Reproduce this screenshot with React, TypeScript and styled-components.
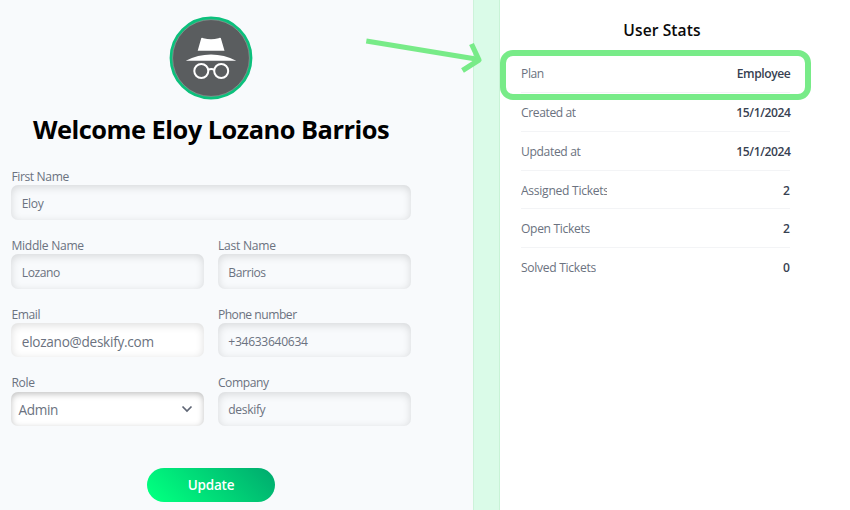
import React from 'react';
import styled, { createGlobalStyle } from 'styled-components';

const GlobalStyle = createGlobalStyle`
  *, *::before, *::after { box-sizing: border-box; }
  body {
    margin: 0;
    background: #fff;
    font-family: "Segoe UI", "Open Sans", "Noto Sans", sans-serif;
    overflow: hidden;
  }
`;

const Page = styled.div`
  position: relative;
  display: grid;
  grid-template-columns: 473px 27px 1fr;
  width: 850px;
  height: 510px;
  overflow: hidden;
`;

const Profile = styled.main`
  background: #f8fafc;
  display: flex;
  flex-direction: column;
  align-items: center;
  width: 473px;
  padding: 16px 62.4px 0 11.4px;
`;

const Divider = styled.div`
  background: #dafbe8;
  border-left: 1px solid #cdf2da;
  border-right: 1px solid #c8f3d6;
`;

const Avatar = styled.svg`
  display: block;
  width: 84px;
  height: 84px;
  flex: none;
`;

const Heading = styled.h1`
  margin: 11px 0 0;
  height: 36px;
  line-height: 36px;
  font-size: 25.4px;
  font-weight: 700;
  letter-spacing: -0.5px;
  color: #000;
  white-space: nowrap;
`;

const Form = styled.form`
  display: grid;
  grid-template-columns: 1fr 1fr;
  column-gap: 13.8px;
  row-gap: 16px;
  width: 100%;
  margin-top: 20px;
`;

const Field = styled.div<{ $wide?: boolean }>`
  grid-column: ${p => (p.$wide ? '1 / -1' : 'auto')};
  height: 52.8px;
`;

const Label = styled.label<{ $spacing: number }>`
  display: block;
  height: 18.4px;
  line-height: 19.6px;
  font-size: 12.1px;
  letter-spacing: ${p => p.$spacing}px;
  color: #6b7280;
  white-space: nowrap;
`;

const Control = styled.div<{ $editable?: boolean; $select?: boolean; $spacing: number }>`
  display: flex;
  align-items: center;
  justify-content: space-between;
  height: 34.4px;
  padding: ${p => (p.$select ? '2px 11px 0 7px' : '2px 10.4px 0')};
  border-radius: 7px;
  background: ${p => (p.$editable ? '#fff' : '#f8fafc')};
  box-shadow: inset 0 ${p => (p.$select ? '2px 6px rgba(0, 0, 0, 0.25)' : '2px 8px rgba(0, 0, 0, 0.14)')};
  font-size: ${p => (p.$editable ? 13.6 : 12.1)}px;
  letter-spacing: ${p => p.$spacing}px;
  color: #6b7280;
  white-space: nowrap;
`;

const Chevron = styled.svg`
  width: 12px;
  height: 8px;
  margin-top: -1px;
`;

const UpdateButton = styled.button`
  margin-top: 41.6px;
  width: 128.4px;
  height: 34.4px;
  flex: none;
  border: 0;
  border-radius: 18px;
  background: linear-gradient(45deg, #00ff7f 8%, #00a96e 100%);
  color: #fff;
  font: 600 13.5px "Segoe UI", "Open Sans", "Noto Sans", sans-serif;
  letter-spacing: -0.2px;
  padding: 1px 0 0;
`;

const Stats = styled.aside`
  padding: 18px 60px 0 21px;
`;

const StatsTitle = styled.h2`
  margin: 0 0 12.3px;
  padding-left: 13px;
  height: 24px;
  line-height: 24px;
  text-align: center;
  font-size: 15.6px;
  font-weight: 600;
  letter-spacing: 0.08px;
  color: #0a0a0a;
`;

const StatRow = styled.div`
  display: flex;
  align-items: center;
  justify-content: space-between;
  height: 38.75px;
  padding-top: 1.2px;
  border-bottom: 1px solid #f3f4f6;
  font-size: 12.1px;
  white-space: nowrap;
  &:last-child { border-bottom-color: transparent; }
`;

const StatName = styled.span<{ $spacing: number }>`
  max-width: 86px;
  overflow: hidden;
  color: #6b7280;
  letter-spacing: ${p => p.$spacing}px;
`;

const StatValue = styled.span<{ $spacing: number }>`
  font-weight: 600;
  color: #374151;
  letter-spacing: ${p => p.$spacing}px;
  margin-right: ${p => p.$spacing}px;
`;

const Highlight = styled.div`
  position: absolute;
  left: 500px;
  top: 50px;
  width: 311px;
  height: 50px;
  border: 6px solid #78eb88;
  border-radius: 13px;
`;

const Arrow = styled.svg`
  position: absolute;
  left: 360px;
  top: 30px;
  width: 130px;
  height: 50px;
`;

type FieldData = {
  label: string;
  value: string;
  ls: number;
  vs: number;
  wide?: boolean;
  editable?: boolean;
  select?: boolean;
};

const fields: FieldData[] = [
  { label: 'First Name', value: 'Eloy', ls: -0.38, vs: -0.4, wide: true },
  { label: 'Middle Name', value: 'Lozano', ls: -0.28, vs: -0.45 },
  { label: 'Last Name', value: 'Barrios', ls: -0.25, vs: -0.45 },
  { label: 'Email', value: 'elozano@deskify.com', ls: -0.4, vs: -0.27, editable: true },
  { label: 'Phone number', value: '+34633640634', ls: -0.48, vs: -0.3 },
  { label: 'Role', value: 'Admin', ls: -0.3, vs: -0.3, editable: true, select: true },
  { label: 'Company', value: 'deskify', ls: -0.4, vs: -0.35 },
];

const stats = [
  { name: 'Plan', value: 'Employee', ns: -0.4, vs: -0.42 },
  { name: 'Created at', value: '15/1/2024', ns: -0.4, vs: -0.42 },
  { name: 'Updated at', value: '15/1/2024', ns: -0.35, vs: -0.42 },
  { name: 'Assigned Tickets', value: '2', ns: -0.28, vs: 0 },
  { name: 'Open Tickets', value: '2', ns: -0.33, vs: 0 },
  { name: 'Solved Tickets', value: '0', ns: -0.3, vs: 0 },
];

export default function App() {
  return (
    <Page>
      <GlobalStyle />
      <Profile>
        <Avatar viewBox="0 0 84 84">
          <circle cx="42" cy="42" r="40" fill="#5a5d5f" stroke="#0cc07c" strokeWidth="2.8" />
          <circle cx="42" cy="42" r="38.4" fill="none" stroke="#a3b2ac" strokeWidth="0.5" />
          <path d="M32.3 22q1-.4 2.2.2 7.500 2 15 0 1.300-.6 2.300-.1l3.700 12.700H28.700z" fill="#fff" />
          <path d="M16.800 44.800q12-6.400 25.200-6.400t25.200 6.400z" fill="#fff" />
          <g fill="none" stroke="#fff" strokeWidth="2">
            <circle cx="32.300" cy="55" r="7" />
            <circle cx="52.200" cy="55" r="7" />
            <path d="M39 54q3.300-2.200 6.500 0" />
          </g>
        </Avatar>
        <Heading>Welcome Eloy Lozano Barrios</Heading>
        <Form>
          {fields.map(f => (
            <Field key={f.label} $wide={f.wide}>
              <Label $spacing={f.ls}>{f.label}</Label>
              <Control $editable={f.editable} $select={f.select} $spacing={f.vs}>
                <span>{f.value}</span>
                {f.select && (
                  <Chevron viewBox="0 0 12 8" fill="none" stroke="#5f6675" strokeWidth="1.7">
                    <path d="M1.500 1.500 6 6l4.500-4.500" />
                  </Chevron>
                )}
              </Control>
            </Field>
          ))}
        </Form>
        <UpdateButton type="button">Update</UpdateButton>
      </Profile>
      <Divider />
      <Stats>
        <StatsTitle>User Stats</StatsTitle>
        {stats.map(s => (
          <StatRow key={s.name}>
            <StatName $spacing={s.ns}>{s.name}</StatName>
            <StatValue $spacing={s.vs}>{s.value}</StatValue>
          </StatRow>
        ))}
      </Stats>
      <Highlight />
      <Arrow viewBox="0 0 130 50" fill="none" stroke="#78eb88" strokeWidth="5.200">
        <path d="M6.300 11 119 29.500" />
        <path d="M111.500 14 119 30l-16.500 10.500" strokeLinejoin="round" />
      </Arrow>
    </Page>
  );
}
